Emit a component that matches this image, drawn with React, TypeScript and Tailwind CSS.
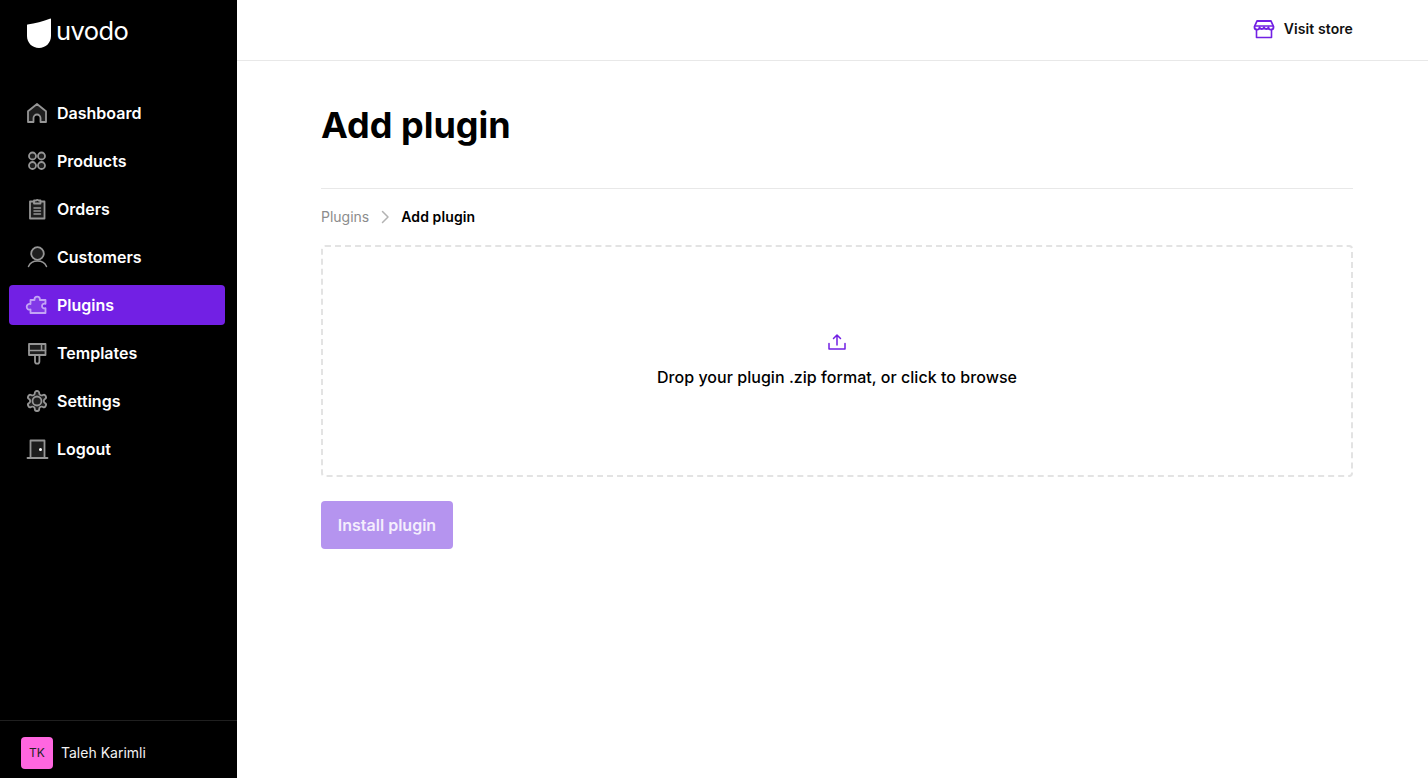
import type { ReactNode } from "react";

const stroke = {
  fill: "none",
  stroke: "currentColor",
  strokeWidth: 1.8,
  strokeLinecap: "round" as const,
  strokeLinejoin: "round" as const,
};

const tint = { fill: "currentColor", fillOpacity: 0.2 };

const Icon = ({ children, className = "" }: { children: ReactNode; className?: string }) => (
  <svg viewBox="0 0 24 24" className={`h-6 w-6 shrink-0 ${className}`} {...stroke}>
    {children}
  </svg>
);

const navItems: { label: string; active?: boolean; icon: ReactNode }[] = [
  {
    label: "Dashboard",
    icon: <path {...tint} d="M3 21V10.200L12 3l9 7.200V21h-5.500v-4a3.500 3.500 0 0 0-7 0v4H3Z" />,
  },
  {
    label: "Products",
    icon: (
      <>
        <circle cx="7.500" cy="7" r="3.500" {...tint} />
        <circle cx="16.500" cy="7" r="3.500" {...tint} />
        <circle cx="7.500" cy="16.500" r="3.500" {...tint} />
        <circle cx="16.500" cy="16.500" r="3.500" {...tint} />
      </>
    ),
  },
  {
    label: "Orders",
    icon: (
      <>
        <path {...tint} d="M9 4.500H5V21.500h14.500V4.500H15.500" />
        <path d="M9 6.500V3.500h2.200a1.300 1.300 0 0 1 2.200 0h2.100v3H9Z" />
        <path d="M9 11h6.500M9 14h6.500M9 17h6.500" strokeWidth={1.5} />
      </>
    ),
  },
  {
    label: "Customers",
    icon: (
      <>
        <circle cx="12.500" cy="8.500" r="6.300" {...tint} />
        <path d="M3.500 21.500c1.500-3.500 5-5.500 9-5.500s7.500 2 9 5.500" strokeWidth={1.5} />
      </>
    ),
  },
  {
    label: "Plugins",
    active: true,
    icon: (
      <path
        {...tint}
        d="M5.500 7H9.500v-.7a2.700 2.700 0 0 1 5.400 0V7h5.600v3.800c-1.900-.7-3.500.4-3.500 2.200s1.600 2.900 3.500 2.200V20H5.500v-3.500c-2 .6-3.800-.6-3.800-2.700s1.800-3.300 3.800-2.700V7Z"
      />
    ),
  },
  {
    label: "Templates",
    icon: (
      <>
        <path {...tint} d="M4 3h16.500v11H4z" />
        <path d="M16.500 3v6.500M4 9.500h16.500" strokeWidth={1.5} />
        <path d="M10 14v6.500a2.200 2.200 0 0 0 4.400 0V14" />
      </>
    ),
  },
  {
    label: "Settings",
    icon: (
      <>
        <path
          {...tint}
          d="M12.220 2h-.44a2 2 0 0 0-2 2v.18a2 2 0 0 1-1 1.730l-.43.250a2 2 0 0 1-2 0l-.15-.08a2 2 0 0 0-2.730.730l-.22.380a2 2 0 0 0 .730 2.730l.15.100a2 2 0 0 1 1 1.720v.510a2 2 0 0 1-1 1.740l-.15.090a2 2 0 0 0-.730 2.730l.22.380a2 2 0 0 0 2.730.730l.15-.08a2 2 0 0 1 2 0l.43.250a2 2 0 0 1 1 1.730V20a2 2 0 0 0 2 2h.44a2 2 0 0 0 2-2v-.18a2 2 0 0 1 1-1.730l.43-.250a2 2 0 0 1 2 0l.15.08a2 2 0 0 0 2.730-.730l.22-.390a2 2 0 0 0-.730-2.730l-.15-.08a2 2 0 0 1-1-1.740v-.5a2 2 0 0 1 1-1.740l.15-.090a2 2 0 0 0 .730-2.730l-.22-.380a2 2 0 0 0-2.730-.730l-.15.08a2 2 0 0 1-2 0l-.43-.250a2 2 0 0 1-1-1.730V4a2 2 0 0 0-2-2z"
        />
        <circle cx="12" cy="12" r="4.500" />
      </>
    ),
  },
  {
    label: "Logout",
    icon: (
      <>
        <path {...tint} d="M5.500 21V3.500h14V21" />
        <path d="M2.500 21h20" />
        <circle cx="15.500" cy="12.500" r=".6" fill="#fff" stroke="#fff" />
      </>
    ),
  },
];

function Sidebar() {
  return (
    <aside className="flex h-screen w-[237px] shrink-0 flex-col bg-black">
      <div className="flex h-[62px] items-center gap-[5px] pl-[27px] pt-[3px]">
        <svg viewBox="0 0 24 30" className="h-[30px] w-[24px] shrink-0">
          <path
            fill="#fff"
            d="M0.500 6.500C8 5.500 16 3.500 23.500 0.500c.4 0 .5.300.500.500V18c0 7-5.500 12-12 12S0 25 0 18V7c0-.300.200-.500.500-.500Z"
          />
        </svg>
        <span className="mb-[3px] text-[25.500px] font-normal leading-none tracking-[-0.6px] text-white">uvodo</span>
      </div>
      <nav className="mt-[27px] flex flex-col pl-[9px] pr-[12px]">
        {navItems.map((item) => (
          <div key={item.label} className="flex h-12 items-center">
            <a
              className={`flex h-10 w-full items-center gap-[8px] rounded pl-4 text-base font-semibold text-white ${
                item.active ? "bg-[#7220e4]" : ""
              }`}
            >
              <Icon className={item.active ? "text-[#c3a4f5]" : "text-[#969696]"}>{item.icon}</Icon>
              {item.label}
            </a>
          </div>
        ))}
      </nav>
      <div className="mt-auto flex h-[58px] items-start gap-2 border-t border-[#1f1f1f] pl-[21px] pt-4">
        <div className="flex h-8 w-8 items-center justify-center rounded bg-[#ff66e0] text-xs font-normal text-[#222]">
          TK
        </div>
        <span className="text-sm font-normal leading-8 text-[#f2f2f2]">Taleh Karimli</span>
      </div>
    </aside>
  );
}

export default function App() {
  return (
    <div className="flex h-screen overflow-hidden bg-white font-['Inter',sans-serif]">
      <Sidebar />
      <main className="min-w-0 flex-1">
        <header className="flex h-[61px] items-center justify-end gap-[8px] border-b border-[#e8e8e8] pb-[2px] pr-[75px]">
          <Icon className="text-[#7220e4]">
            <path d="M5 4h14l2.500 5.500v.5a2.500 2.500 0 0 1-5 .2 2.300 2.300 0 0 1-4.500 0 2.300 2.300 0 0 1-4.500 0 2.500 2.500 0 0 1-5-.2v-.5L5 4Z" />
            <path d="M4.500 12.500V20.500h15v-8M3 9h18" strokeWidth={1.6} />
          </Icon>
          <span className="text-sm font-semibold tracking-[0.1px] text-[#111]">Visit store</span>
        </header>
        <div className="px-[84px] pr-[75px]">
          <h1 className="flex h-[128px] items-center border-b border-[#e8e8e8] pt-[1px] text-[36px] font-bold leading-none text-black">
            Add plugin
          </h1>
          <div className="mt-[18px] flex h-5 items-center text-sm">
            <span className="font-normal text-[#8c8c8c]">Plugins</span>
            <svg viewBox="0 0 10 14" className="ml-[11px] mr-[11px] h-[14px] w-[10px] text-[#b3b3b3]" {...stroke} strokeWidth={1.5}>
              <path d="m2.500 1.500 5.500 5.500-5.500 5.500" />
            </svg>
            <span className="font-semibold tracking-[0.1px] text-black">Add plugin</span>
          </div>
          <div className="mt-[18px] flex h-[232px] flex-col items-center rounded border-2 border-dashed border-[#e3e3e3] pt-[85px]">
            <svg viewBox="0 0 20 20" className="h-5 w-5 text-[#7220e4]" {...stroke} strokeWidth={1.5}>
              <path d="M10 13V3.500M6.500 6.500 10 3l3.500 3.500" />
              <path d="M2 11.500v5.500h16v-5.500" />
            </svg>
            <p className="mt-[15px] text-base font-medium leading-5 tracking-[0.04px] text-black">
              Drop your plugin .zip format, or click to browse
            </p>
          </div>
          <button className="mt-[24px] flex h-12 w-[132px] items-center justify-center rounded bg-[#b594ef] text-base font-semibold text-[#f4eefd]">
            Install plugin
          </button>
        </div>
      </main>
    </div>
  );
}
